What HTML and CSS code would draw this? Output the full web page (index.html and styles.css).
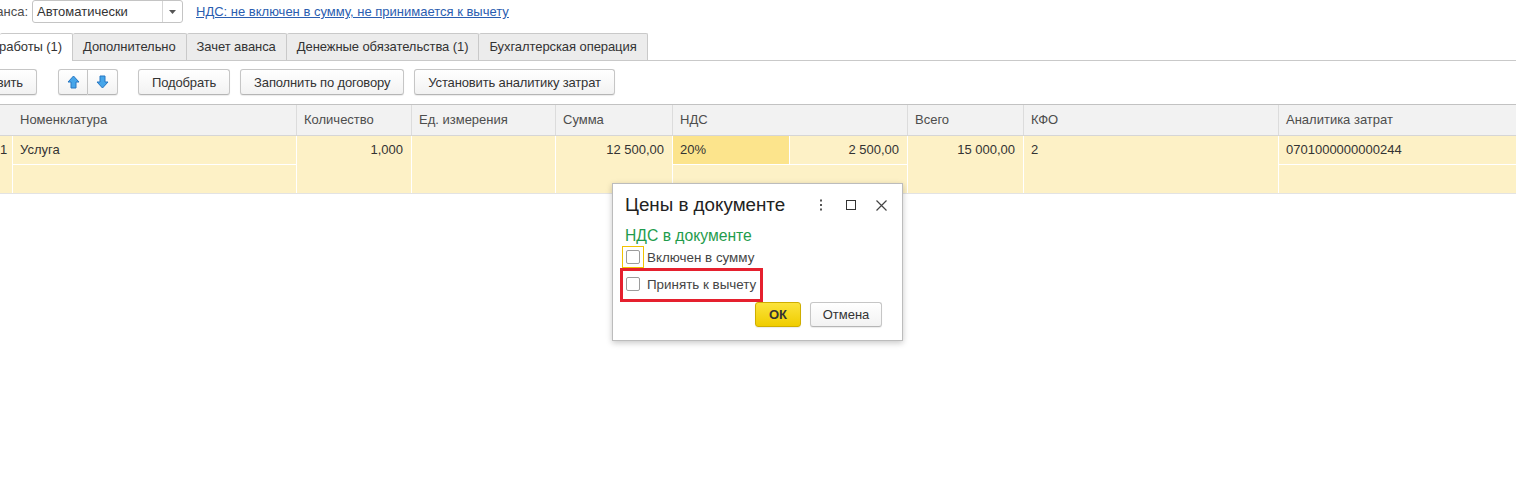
FILE: index.html
```html
<!DOCTYPE html>
<html lang="ru">
<head>
<meta charset="utf-8">
<title>Поступление услуг</title>
<link rel="stylesheet" href="styles.css">
</head>
<body>
<div class="page">
  <div class="top-row">
    <div class="field-label"><span>Способ зачета аванса:</span></div>
    <div class="combo">
      <span class="combo-text">Автоматически</span>
      <span class="combo-btn">
        <svg width="7" height="4" viewBox="0 0 7 4"><path d="M0 0h7L3.5 4z" fill="#555"/></svg>
      </span>
    </div>
    <a class="vat-link" href="#">НДС: не включен в сумму, не принимается к вычету</a>
  </div>

  <div class="tabs">
    <div class="tab tab-active"><span>Товары, работы (1)</span></div>
    <div class="tab">Дополнительно</div>
    <div class="tab">Зачет аванса</div>
    <div class="tab">Денежные обязательства (1)</div>
    <div class="tab">Бухгалтерская операция</div>
  </div>

  <div class="toolbar">
    <div class="btn-clip"><button class="btn">Добавить</button></div>
    <div class="btn-group">
      <button class="btn icon-btn">
        <svg width="13" height="14" viewBox="0 0 13 14"><path d="M6.5 1L12 7H9v6H4V7H1z" fill="#46a6ea" stroke="#2776c2" stroke-width="1" stroke-linejoin="round"/></svg>
      </button>
      <button class="btn icon-btn">
        <svg width="13" height="14" viewBox="0 0 13 14"><path d="M6.5 13L12 7H9V1H4v6H1z" fill="#46a6ea" stroke="#2776c2" stroke-width="1" stroke-linejoin="round"/></svg>
      </button>
    </div>
    <button class="btn">Подобрать</button>
    <button class="btn">Заполнить по договору</button>
    <button class="btn">Установить аналитику затрат</button>
  </div>

  <div class="grid grid-head">
    <div class="hcell"></div>
    <div class="hcell">Номенклатура</div>
    <div class="hcell">Количество</div>
    <div class="hcell">Ед. измерения</div>
    <div class="hcell">Сумма</div>
    <div class="hcell span-vat">НДС</div>
    <div class="hcell">Всего</div>
    <div class="hcell">КФО</div>
    <div class="hcell">Аналитика затрат</div>
  </div>

  <div class="grid grid-body">
    <div class="cell num both c1">1</div>
    <div class="cell r1 c2">Услуга</div>
    <div class="cell r2 c2"></div>
    <div class="cell both c3 right">1,000</div>
    <div class="cell both c4"></div>
    <div class="cell both c5 right">12 500,00</div>
    <div class="cell r1 c6 rate">20%</div>
    <div class="cell r1 c7 right">2 500,00</div>
    <div class="cell r2 vat-rest"></div>
    <div class="cell both c8 right">15 000,00</div>
    <div class="cell both c9">2</div>
    <div class="cell r1 c10">0701000000000244</div>
    <div class="cell r2 c10"></div>
  </div>
</div>

<div class="dialog">
  <div class="dlg-head">
    <div class="dlg-title">Цены в документе</div>
    <div class="dlg-tools">
      <span class="tool">
        <svg width="4" height="12" viewBox="0 0 4 12"><rect x="1" y="0.5" width="2" height="2" fill="#555"/><rect x="1" y="5" width="2" height="2" fill="#555"/><rect x="1" y="9.5" width="2" height="2" fill="#555"/></svg>
      </span>
      <span class="tool">
        <svg width="10" height="10" viewBox="0 0 10 10"><rect x="0.5" y="0.5" width="9" height="9" fill="none" stroke="#333" stroke-width="1"/></svg>
      </span>
      <span class="tool">
        <svg width="11" height="11" viewBox="0 0 11 11"><path d="M0.5 0.5l10 10M10.5 0.5l-10 10" stroke="#444" stroke-width="1.2"/></svg>
      </span>
    </div>
  </div>
  <div class="group-title">НДС в документе</div>
  <label class="check-row"><span class="check-wrap focused"><span class="check"></span></span>Включен в сумму</label>
  <label class="check-row second"><span class="check-wrap"><span class="check"></span></span>Принять к вычету</label>
  <div class="dlg-buttons">
    <button class="btn btn-ok">ОК</button>
    <button class="btn btn-cancel">Отмена</button>
  </div>
  <div class="mark"></div>
</div>
</body>
</html>
```

FILE: styles.css
```css
html, body {
  margin: 0;
  padding: 0;
  background: #fff;
  overflow: hidden;
}

body {
  width: 1516px;
  height: 478px;
  position: relative;
  font-family: "Liberation Sans", Arial, sans-serif;
  font-size: 13px;
  color: #4d4d4d;
}

/* ---------- top field row ---------- */
.top-row {
  display: flex;
  align-items: center;
  height: 23px;
}

.field-label {
  width: 28px;
  display: flex;
  justify-content: flex-end;
  white-space: nowrap;
  margin-right: 4px;
}

.combo {
  box-sizing: border-box;
  width: 151px;
  height: 23px;
  border: 1px solid #c4c4c4;
  border-radius: 3px;
  display: flex;
  align-items: stretch;
  background: #fff;
}

.combo-text {
  flex: 1;
  padding-left: 4px;
  line-height: 21px;
  color: #333;
}

.combo-btn {
  width: 19px;
  border-left: 1px solid #d6d6d6;
  display: flex;
  align-items: center;
  justify-content: center;
}

.vat-link {
  margin-left: 13px;
  color: #2a5db0;
  text-decoration: underline;
}

/* ---------- tabs ---------- */
.tabs {
  display: flex;
  align-items: flex-end;
  margin-top: 10px;
  border-bottom: 1px solid #c9c9c9;
}

.tab {
  box-sizing: border-box;
  height: 27px;
  line-height: 26px;
  padding: 0 10px;
  background: #ececec;
  border-top: 1px solid #c9c9c9;
  border-right: 1px solid #c9c9c9;
  border-radius: 2px 2px 0 0;
  color: #333;
  white-space: nowrap;
  letter-spacing: -0.075px;
}

.tab-active {
  width: 73px;
  height: 28px;
  margin-bottom: -1px;
  background: #fff;
  display: flex;
  justify-content: flex-end;
}

/* ---------- toolbar ---------- */
.toolbar {
  display: flex;
  align-items: center;
  margin-top: 8px;
  gap: 10px;
}

.btn {
  box-sizing: border-box;
  height: 26px;
  padding: 0 13px;
  font-family: inherit;
  font-size: 13px;
  color: #333;
  background: linear-gradient(#ffffff, #f2f2f2);
  border: 1px solid #c6c6c6;
  border-bottom-color: #b5b5b5;
  border-radius: 3px;
  box-shadow: 0 1px 1px rgba(0, 0, 0, 0.08);
  white-space: nowrap;
  cursor: default;
}

.toolbar .btn {
  letter-spacing: -0.15px;
}

.btn-clip {
  width: 37px;
  display: flex;
  justify-content: flex-end;
  margin-right: 11px;
}

.btn-group {
  display: flex;
  margin-right: 10px;
}

.icon-btn {
  width: 30px;
  padding: 0;
  display: flex;
  align-items: center;
  justify-content: center;
}

.btn-group .icon-btn:first-child {
  border-radius: 3px 0 0 3px;
}

.btn-group .icon-btn:last-child {
  border-radius: 0 3px 3px 0;
  border-left: none;
  width: 30px;
}

/* ---------- table ---------- */
.grid {
  display: grid;
  grid-template-columns: 12px 283px 114px 143px 116px 116px 117px 115px 254px 1fr;
  column-gap: 1px;
}

.grid-head {
  margin-top: 9px;
  border-top: 1px solid #c2c2c2;
  border-bottom: 1px solid #d6d6d6;
  background: #dcdcdc;
}

.hcell {
  background: #f2f2f2;
  height: 30px;
  line-height: 30px;
  padding: 0 7px;
  white-space: nowrap;
  overflow: hidden;
}

.span-vat {
  grid-column: 6 / 8;
}

.grid-body {
  grid-template-rows: 28px 28px;
  row-gap: 1px;
  background: #fff;
  border-bottom: 1px solid #e3e3e3;
}

.cell {
  background: #fdf1c6;
  line-height: 28px;
  padding: 0 7px;
  color: #333;
  white-space: nowrap;
  overflow: hidden;
}

.right {
  text-align: right;
  padding-right: 8px;
}

.num {
  text-align: right;
  padding: 0 11px 0 0;
}

.r1 { grid-row: 1; }
.r2 { grid-row: 2; }
.both { grid-row: 1 / 3; }

.c1 { grid-column: 1; }
.c2 { grid-column: 2; }
.c3 { grid-column: 3; }
.c4 { grid-column: 4; }
.c5 { grid-column: 5; }
.c6 { grid-column: 6; }
.c7 { grid-column: 7; }
.c8 { grid-column: 8; }
.c9 { grid-column: 9; }
.c10 { grid-column: 10; }

.vat-rest {
  grid-column: 6 / 8;
}

.rate {
  background: #fce48c;
}

/* ---------- dialog ---------- */
.dialog {
  position: absolute;
  left: 612px;
  top: 183px;
  box-sizing: border-box;
  width: 291px;
  height: 158px;
  padding: 10px 6px 0 12px;
  background: #fff;
  border: 1px solid #bcbcbc;
  box-shadow: 0 2px 6px rgba(0, 0, 0, 0.22);
  color: #454545;
}

.dlg-head {
  display: flex;
  align-items: center;
  height: 22px;
}

.dlg-title {
  flex: 1;
  font-size: 18.8px;
  line-height: 22px;
  color: #222;
}

.dlg-tools {
  display: flex;
}

.tool {
  width: 30px;
  height: 22px;
  display: flex;
  align-items: center;
  justify-content: center;
}

.group-title {
  margin-top: 11px;
  font-size: 15.7px;
  line-height: 18px;
  color: #1f9c4c;
}

.check-row {
  display: flex;
  align-items: center;
  height: 22px;
  margin-top: 1px;
  font-size: 13.4px;
}

.check-row.second {
  margin-top: 5px;
}

.check-wrap {
  box-sizing: border-box;
  width: 22px;
  height: 22px;
  margin-left: -3px;
  margin-right: 3px;
  border: 1px solid transparent;
  display: flex;
  align-items: center;
  justify-content: center;
}

.check-wrap.focused {
  border-color: #f2c300;
}

.check {
  box-sizing: border-box;
  width: 14px;
  height: 14px;
  border: 1px solid #9c9c9c;
  border-radius: 2px;
  background: #fff;
}

.dlg-buttons {
  display: flex;
  justify-content: flex-end;
  gap: 9px;
  margin-top: 7px;
  padding-right: 14px;
}

.dlg-buttons .btn {
  height: 25px;
  padding: 0;
}

.btn-ok {
  width: 46px;
  font-weight: bold;
  background: linear-gradient(#fbe33c, #f0cd00);
  border-color: #cfae00;
  color: #333;
}

.btn-cancel {
  width: 72px;
}

.mark {
  position: absolute;
  left: 7px;
  top: 84px;
  box-sizing: border-box;
  width: 143px;
  height: 34px;
  border: 3px solid #e5202e;
}
```
